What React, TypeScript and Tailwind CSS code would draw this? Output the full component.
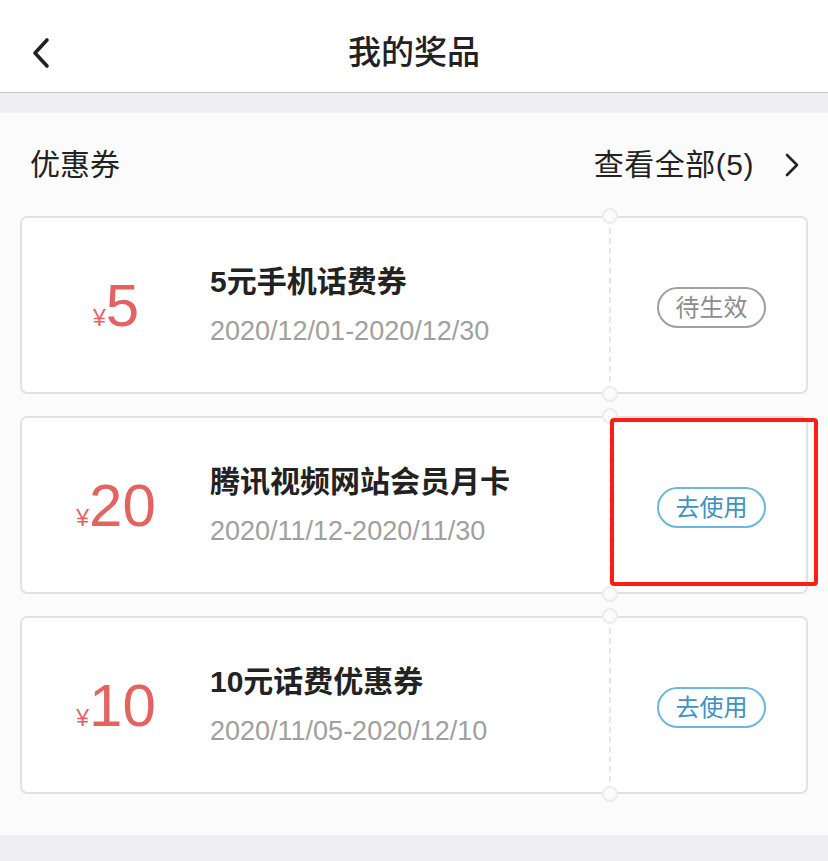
import { FC } from "react";

type Coupon = {
  amount: string;
  title: string;
  date: string;
  status: "pending" | "use";
};

const coupons: Coupon[] = [
  { amount: "5", title: "5元手机话费券", date: "2020/12/01-2020/12/30", status: "pending" },
  { amount: "20", title: "腾讯视频网站会员月卡", date: "2020/11/12-2020/11/30", status: "use" },
  { amount: "10", title: "10元话费优惠券", date: "2020/11/05-2020/12/10", status: "use" },
];

const font = "font-['Liberation_Sans','Noto_Sans_CJK_SC',sans-serif]";

const CouponCard: FC<{ coupon: Coupon; marked?: boolean }> = ({ coupon, marked }) => {
  return (
    <div className="relative flex h-[178px] rounded-[7px] border-2 border-[#e2e2e2] bg-white">
      {/* amount */}
      <div className="flex w-[188px] items-center justify-center pt-[2px] text-[#e2635f]">
        <span className="mt-[24px] text-[23px] leading-none">¥</span>
        <span className="text-[60px] leading-none">{coupon.amount}</span>
      </div>

      {/* info */}
      <div className="flex w-[399px] flex-col justify-center pt-[2px]">
        <p className="text-[30px] font-semibold leading-[40px] text-[#222]">{coupon.title}</p>
        <p className="mt-[10px] text-[27px] leading-[38px] text-[#a0a0a0]">{coupon.date}</p>
      </div>

      {/* divider */}
      <div className="relative w-0 border-l-2 border-dashed border-[#e6e6e6]">
        <div className="absolute -left-[9px] -top-[10px] h-[16px] w-[16px] rounded-full border-2 border-[#ececec] bg-[#fbfbfb]" />
        <div className="absolute -bottom-[10px] -left-[9px] h-[16px] w-[16px] rounded-full border-2 border-[#ececec] bg-[#fbfbfb]" />
      </div>

      {/* action */}
      <div className="flex flex-1 items-center justify-center pl-[6px] pt-[5px]">
        {coupon.status === "pending" ? (
          <span className="flex h-[41px] w-[109px] items-center justify-center rounded-full border-2 border-[#a0a0a0] text-[24px] text-[#8c8c8c]">
            待生效
          </span>
        ) : (
          <span className="flex h-[41px] w-[109px] items-center justify-center rounded-full border-2 border-[#6bb8dc] text-[24px] text-[#3f92c2]">
            去使用
          </span>
        )}
      </div>

      {marked && (
        <div className="pointer-events-none absolute left-[588px] top-[0px] h-[168px] w-[208px] rounded-[4px] border-[4px] border-[#fb1d16]" />
      )}
    </div>
  );
};

const App: FC = () => {
  return (
    <div className={`flex h-[861px] w-[828px] flex-col bg-white ${font}`}>
      {/* header */}
      <div className="relative flex h-[93px] items-center justify-center border-b border-[#c8c8cc] bg-white">
        <svg
          className="absolute left-[31px] top-[37px]"
          width="20"
          height="32"
          viewBox="0 0 20 32"
          fill="none"
          stroke="#222"
          strokeWidth="3.6"
          strokeLinecap="round"
          strokeLinejoin="round"
        >
          <polyline points="16,3 4,16 16,29" />
        </svg>
        <h1 className="pt-[13px] text-[33px] font-medium text-[#222]">我的奖品</h1>
      </div>
      <div className="h-[20px] bg-[#eeeef3]" />

      {/* content */}
      <div className="flex flex-1 flex-col bg-[#fbfbfb] px-[20px]">
        <div className="flex h-[103px] items-center justify-between pl-[10px] pr-[8px]">
          <span className="text-[30px] text-[#222]">优惠券</span>
          <div className="flex items-center">
            <span className="text-[30px] tracking-[0.5px] text-[#222]">查看全部(5)</span>
            <svg
              className="ml-[30px]"
              width="16"
              height="26"
              viewBox="0 0 16 26"
              fill="none"
              stroke="#222"
              strokeWidth="2.6"
              strokeLinecap="round"
              strokeLinejoin="round"
            >
              <polyline points="3,3 13,13 3,23" />
            </svg>
          </div>
        </div>

        <div className="flex flex-col gap-[22px]">
          {coupons.map((c, i) => (
            <CouponCard key={i} coupon={c} marked={i === 1} />
          ))}
        </div>
      </div>

      <div className="h-[26px] border-t border-[#f2f2f6] bg-[#eeeef3]" />
    </div>
  );
};

export default App;
